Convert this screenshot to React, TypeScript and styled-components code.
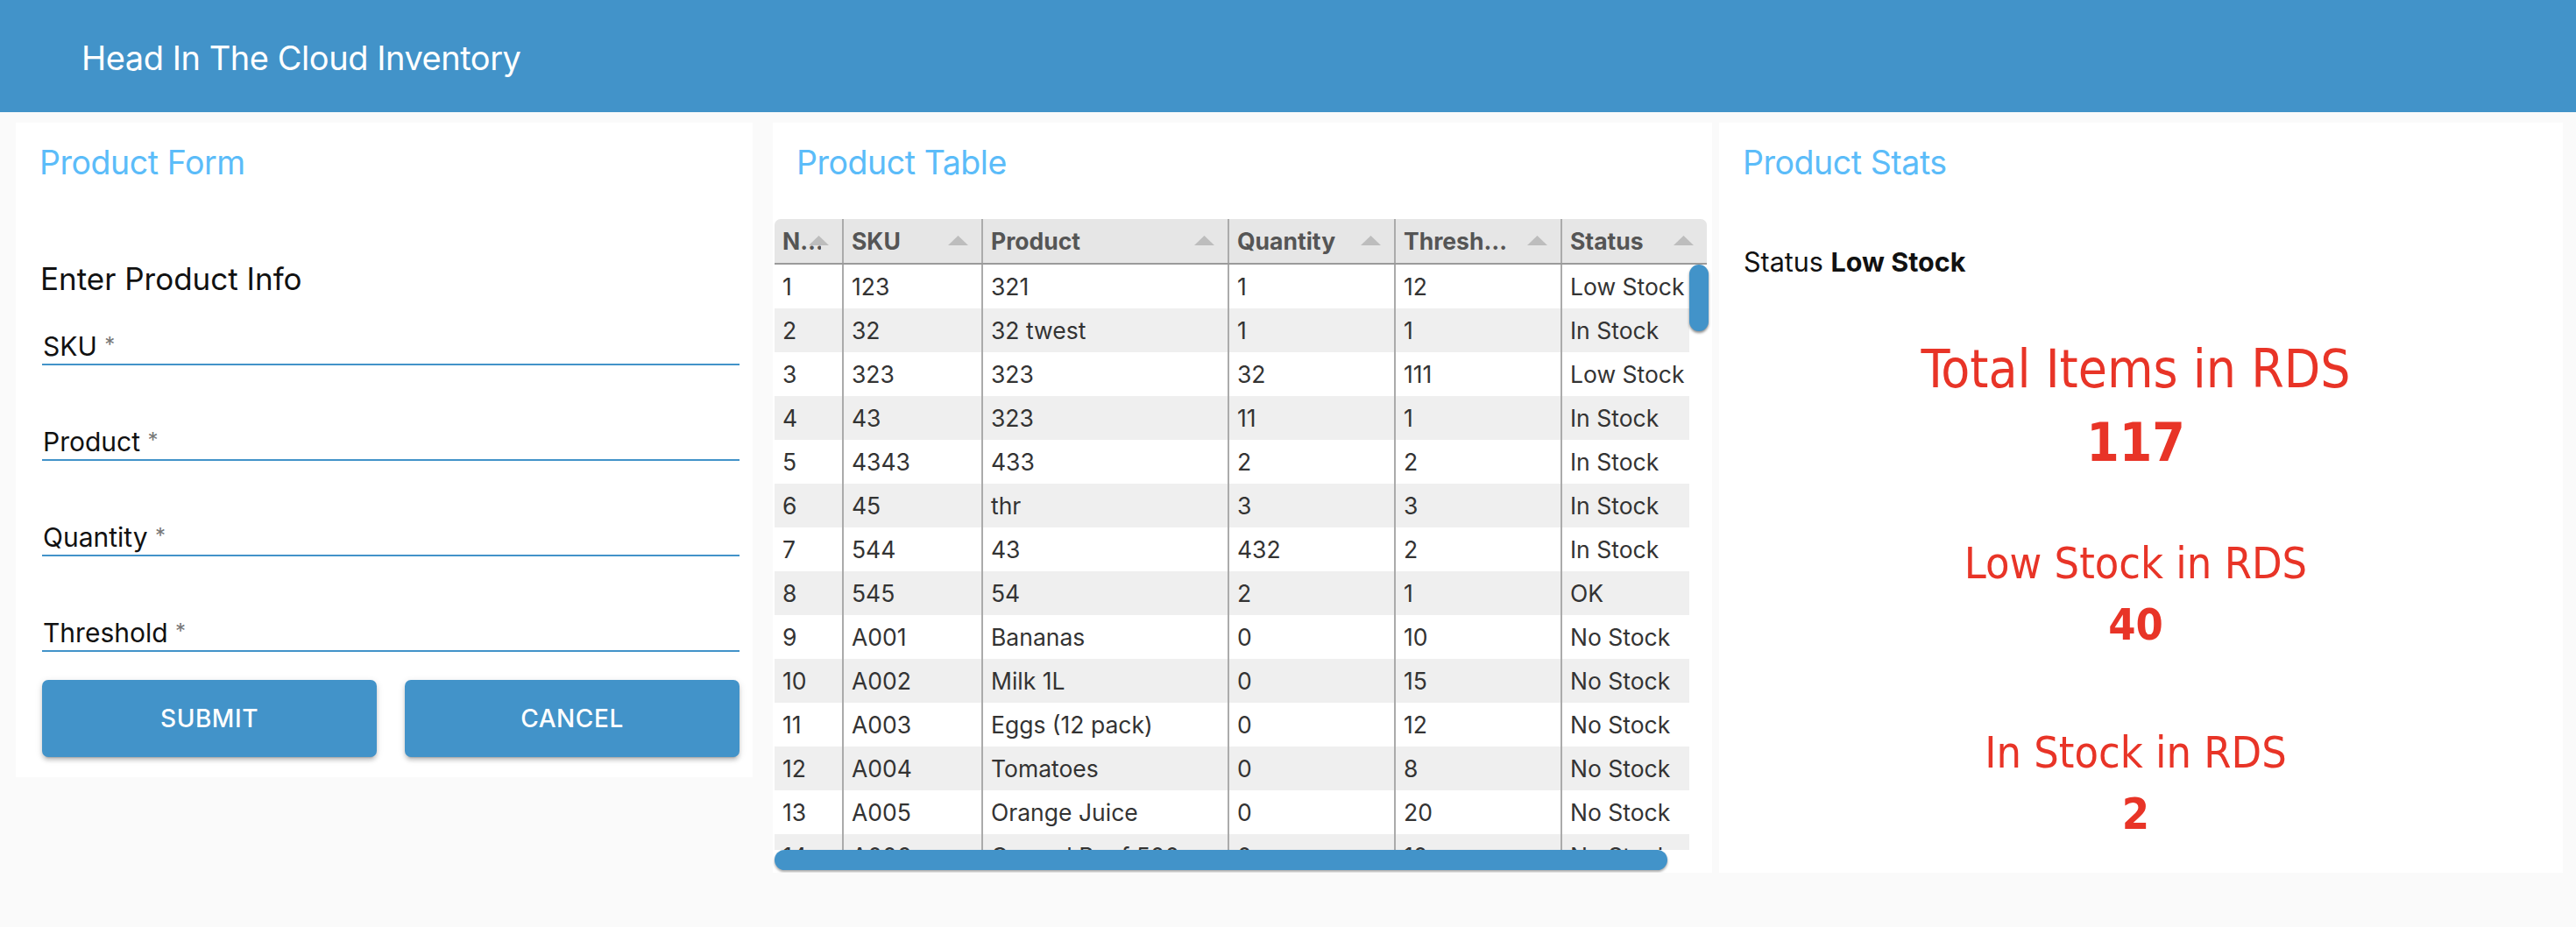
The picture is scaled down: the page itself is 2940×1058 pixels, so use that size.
import React from 'react';
import styled, { createGlobalStyle } from 'styled-components';

const GlobalStyle = createGlobalStyle`
  * { box-sizing: border-box; }
  html, body {
    margin: 0;
    padding: 0;
    background: #fafafa;
  }
  body {
    width: 2940px;
    height: 1058px;
    overflow: hidden;
    font-family: Inter, "Liberation Sans", sans-serif;
    color: #111;
  }
`;

const COLUMNS = '79px 159px 281px 190px 190px 165px';

const products = [
    { id: 1, sku: '123', name: '321', qty: 1, threshold: 12, status: 'Low Stock' },
    { id: 2, sku: '32', name: '32 twest', qty: 1, threshold: 1, status: 'In Stock' },
    { id: 3, sku: '323', name: '323', qty: 32, threshold: 111, status: 'Low Stock' },
    { id: 4, sku: '43', name: '323', qty: 11, threshold: 1, status: 'In Stock' },
    { id: 5, sku: '4343', name: '433', qty: 2, threshold: 2, status: 'In Stock' },
    { id: 6, sku: '45', name: 'thr', qty: 3, threshold: 3, status: 'In Stock' },
    { id: 7, sku: '544', name: '43', qty: 432, threshold: 2, status: 'In Stock' },
    { id: 8, sku: '545', name: '54', qty: 2, threshold: 1, status: 'OK' },
    { id: 9, sku: 'A001', name: 'Bananas', qty: 0, threshold: 10, status: 'No Stock' },
    { id: 10, sku: 'A002', name: 'Milk 1L', qty: 0, threshold: 15, status: 'No Stock' },
    { id: 11, sku: 'A003', name: 'Eggs (12 pack)', qty: 0, threshold: 12, status: 'No Stock' },
    { id: 12, sku: 'A004', name: 'Tomatoes', qty: 0, threshold: 8, status: 'No Stock' },
    { id: 13, sku: 'A005', name: 'Orange Juice', qty: 0, threshold: 20, status: 'No Stock' },
    { id: 14, sku: 'A006', name: 'Ground Beef 500g', qty: 0, threshold: 10, status: 'No Stock' },
];

const headers = ['No.', 'SKU', 'Product', 'Quantity', 'Threshold', 'Status'];

const stats = [
    { label: 'Total Items in RDS', value: 117, size: 60, gap: 62 },
    { label: 'Low Stock in RDS', value: 40, size: 50, gap: 61 },
    { label: 'In Stock in RDS', value: 2, size: 50, gap: 76 },
];

const SortIcon = () => (
    <svg width="23" height="11" viewBox="0 0 23 11">
        <polygon points="11.5,0 23,11 0,11" fill="#bdbdbd" />
    </svg>
);

export default function App() {
    return (
        <>
            <GlobalStyle />
            <AppBar>
                <AppTitle>Head In The Cloud Inventory</AppTitle>
            </AppBar>
            <Main>
                <Panel $width={841} $height={747} $right={23}>
                    <PanelTitle>Product Form</PanelTitle>
                    <FormBody>
                        <FormHeading>Enter Product Info</FormHeading>
                        <Fields>
                            {['SKU', 'Product', 'Quantity', 'Threshold'].map((label) => (
                                <Field key={label}>
                                    <FieldLabel>
                                        {label} <Required>*</Required>
                                    </FieldLabel>
                                </Field>
                            ))}
                        </Fields>
                        <Buttons>
                            <Button>Submit</Button>
                            <Button>Cancel</Button>
                        </Buttons>
                    </FormBody>
                </Panel>

                <Panel $width={1072} $height={856} $right={8}>
                    <PanelTitle>Product Table</PanelTitle>
                    <Grid>
                        <HeaderRow>
                            {headers.map((h) => (
                                <HeaderCell key={h}>
                                    <HeaderTitle>{h}</HeaderTitle>
                                    <SortSlot>
                                        <SortIcon />
                                    </SortSlot>
                                </HeaderCell>
                            ))}
                        </HeaderRow>
                        <GridBody>
                            <Viewport>
                                {products.map((p) => (
                                    <Row key={p.id}>
                                        <Cell>{p.id}</Cell>
                                        <Cell>{p.sku}</Cell>
                                        <Cell>{p.name}</Cell>
                                        <Cell>{p.qty}</Cell>
                                        <Cell>{p.threshold}</Cell>
                                        <Cell>{p.status}</Cell>
                                    </Row>
                                ))}
                            </Viewport>
                            <VThumb />
                            <HThumb />
                        </GridBody>
                    </Grid>
                </Panel>

                <Panel $width={963} $height={856} $right={0}>
                    <PanelTitle>Product Stats</PanelTitle>
                    <StatusLine>
                        Status <b>Low Stock</b>
                    </StatusLine>
                    <StatsBody>
                        {stats.map((s) => (
                            <Stat key={s.label} $size={s.size} $gap={s.gap}>
                                <StatLabel>{s.label}</StatLabel>
                                <StatValue>{s.value}</StatValue>
                            </Stat>
                        ))}
                    </StatsBody>
                </Panel>
            </Main>
        </>
    );
}

const AppBar = styled.header`
    height: 128px;
    background: #4293c9;
    display: flex;
    align-items: center;
    padding: 4px 0 0 93px;
`

const AppTitle = styled.h1`
    margin: 0;
    color: #fff;
    font-size: 38px;
    font-weight: 400;
    line-height: 46px;
    letter-spacing: -0.012em;
`

const Main = styled.main`
    display: flex;
    align-items: flex-start;
    padding: 12px 15px 0 18px;
`

const Panel = styled.section<{ $width: number; $height: number; $right: number }>`
    width: ${(p) => p.$width}px;
    height: ${(p) => p.$height}px;
    margin-right: ${(p) => p.$right}px;
    flex: none;
    background: #fff;
    padding-top: 23px;
    overflow: hidden;
`

const PanelTitle = styled.h2`
    margin: 0;
    padding-left: 27px;
    color: #5bbcf9;
    font-size: 37.5px;
    font-weight: 400;
    line-height: 45px;
    letter-spacing: -0.012em;
`

const FormBody = styled.div`
    padding: 0 15px 0 30px;
`

const FormHeading = styled.h3`
    margin: 89px 0 0 -2px;
    font-size: 35px;
    font-weight: 400;
    line-height: 42px;
    letter-spacing: 0;
    color: #111;
`

const Fields = styled.div`
    display: flex;
    flex-direction: column;
    gap: 31px;
`

const Field = styled.div`
    height: 78px;
    display: flex;
    align-items: flex-end;
    padding: 0 0 2px 1px;
    border-bottom: 2px solid #4293c9;
`

const FieldLabel = styled.label`
    font-size: 30px;
    line-height: 36px;
    color: #111;
`

const Required = styled.span`
    color: #777;
    font-size: 24px;
    vertical-align: 4px;
`

const Buttons = styled.div`
    display: grid;
    grid-template-columns: 1fr 1fr;
    gap: 32px;
    margin-top: 32px;
`

const Button = styled.button`
    height: 88px;
    border: none;
    border-radius: 7px;
    background: #4293c9;
    color: #fff;
    font-family: Inter, "Liberation Sans", sans-serif;
    font-size: 28px;
    font-weight: 500;
    letter-spacing: 0.02em;
    text-transform: uppercase;
    box-shadow: 0 5px 2px -4px rgba(0, 0, 0, 0.2), 0 4px 4px 0 rgba(0, 0, 0, 0.14),
        0 2px 9px 0 rgba(0, 0, 0, 0.12);
    cursor: pointer;
`

const Grid = styled.div`
    width: 1066px;
    margin: 42px 0 0 2px;
`

const HeaderRow = styled.div`
    display: grid;
    grid-template-columns: ${COLUMNS};
    height: 52px;
    background: #e6e6e6;
    border-bottom: 2px solid #9a9a9a;
    border-radius: 7px 7px 0 0;
    width: 1064px;
`

const HeaderCell = styled.div`
    position: relative;
    display: flex;
    align-items: center;
    padding-left: 9px;
    border-right: 2px solid #ababab;

    &:last-child {
        border-right: none;
    }
`

const HeaderTitle = styled.span`
    max-width: calc(100% - 58px);
    min-width: 44px;
    overflow: hidden;
    white-space: nowrap;
    text-overflow: ellipsis;
    font-size: 26.5px;
    font-weight: 700;
    color: #555;
`

const SortSlot = styled.span`
    position: absolute;
    right: 15px;
    top: 50%;
    transform: translateY(-55%);
    display: flex;
`

const GridBody = styled.div`
    position: relative;
    height: 691px;
`

const Viewport = styled.div`
    width: 1044px;
    height: 668px;
    overflow: hidden;
`

const Row = styled.div`
    display: grid;
    grid-template-columns: ${COLUMNS};
    width: 1064px;
    height: 50px;
    background: #fff;

    &:nth-child(even) {
        background: #efefef;
    }
`

const Cell = styled.div`
    display: flex;
    align-items: center;
    padding-left: 9px;
    border-right: 2px solid #ababab;
    font-size: 26.5px;
    color: #333;
    white-space: nowrap;
    overflow: hidden;

    &:last-child {
        border-right: none;
    }
`

const VThumb = styled.div`
    position: absolute;
    top: 0;
    left: 1044px;
    width: 22px;
    height: 76px;
    border-radius: 11px;
    background: #4293c9;
    box-shadow: 0 2px 3px rgba(0, 0, 0, 0.45);
`

const HThumb = styled.div`
    position: absolute;
    left: 0;
    bottom: 0;
    width: 1019px;
    height: 23px;
    border-radius: 11.5px;
    background: #4293c9;
    box-shadow: 0 2px 3px rgba(0, 0, 0, 0.35);
`

const StatusLine = styled.p`
    margin: 73px 0 0;
    padding-left: 28px;
    font-size: 30.5px;
    line-height: 36px;
    color: #111;

    b {
        font-weight: 700;
    }
`

const StatsBody = styled.div`
    display: flex;
    flex-direction: column;
    align-items: center;
    padding-right: 12px;
    color: #e83427;
    font-family: "DejaVu Sans Condensed", "DejaVu Sans", Verdana, sans-serif;
    font-stretch: condensed;
`

const Stat = styled.div<{ $size: number; $gap: number }>`
    display: flex;
    flex-direction: column;
    align-items: center;
    margin-top: ${(p) => p.$gap}px;
    font-size: ${(p) => p.$size}px;
    line-height: ${(p) => Math.round(p.$size * 1.4)}px;
`

const StatLabel = styled.div`
    white-space: nowrap;
`

const StatValue = styled.div`
    font-weight: 700;
`
